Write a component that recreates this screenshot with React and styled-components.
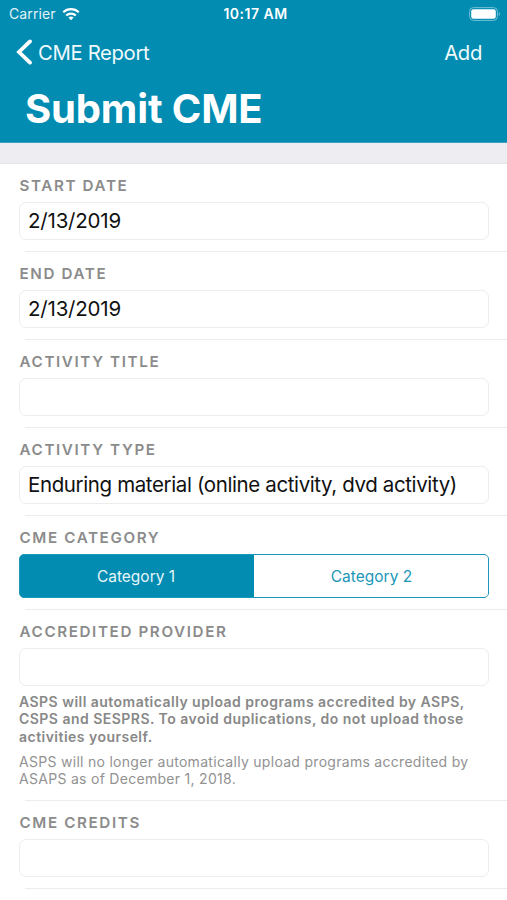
import React, { useState } from 'react';
import styled, { createGlobalStyle } from 'styled-components';

const GlobalStyle = createGlobalStyle`
  * {
    box-sizing: border-box;
  }
  body {
    margin: 0;
    background: #fff;
    font-family: Inter, "Liberation Sans", sans-serif;
  }
`;

const Screen = styled.div`
  width: 507px;
  height: 900px;
  overflow: hidden;
  background: #fff;
`;

const Header = styled.header`
  height: 143px;
  background: #028cb2;
  border-bottom: 1px solid #3ba3c0;
  color: #fff;
`;

const StatusBar = styled.div`
  display: grid;
  grid-template-columns: 1fr auto 1fr;
  align-items: center;
  height: 27px;
  padding: 0 6px 0 9px;
`;

const Carrier = styled.div`
  display: flex;
  align-items: center;
  gap: 6px;
  font-size: 14px;
  letter-spacing: 0.1px;
  color: #e2f3f8;
`;

const Clock = styled.div`
  padding-left: 1px;
  font-size: 14px;
  font-weight: 600;
  letter-spacing: 0.5px;
`;

const Battery = styled.div`
  display: flex;
  justify-content: flex-end;
`;

const NavBar = styled.nav`
  display: flex;
  justify-content: space-between;
  align-items: center;
  height: 50px;
  padding: 0 25px 0 16px;
`;

const NavButton = styled.button`
  display: flex;
  align-items: center;
  gap: 5px;
  padding: 0;
  border: 0;
  background: none;
  color: #f0fafc;
  font-family: inherit;
  font-size: 20.3px;
  letter-spacing: -0.35px;
`;

const Title = styled.h1`
  margin: 7px 0 0 25px;
  font-size: 40px;
  line-height: 50px;
  font-weight: 700;
  letter-spacing: -0.15px;
`;

const Spacer = styled.div`
  height: 21px;
  background: #eeeef2;
  border-bottom: 1px solid #e4e4e7;
`;

const Row = styled.div`
  height: ${props => props.$height || 88}px;
  padding: 11px 18px 0 19px;
  background: linear-gradient(#ececee, #ececee) no-repeat 25px 100% / 100% 1px;
`;

const Label = styled.div`
  height: 27px;
  padding-left: 0.5px;
  font-size: 15.2px;
  line-height: 22px;
  font-weight: 600;
  letter-spacing: 1.62px;
  color: #8b8b8b;
  text-transform: uppercase;
  white-space: nowrap;
`;

const Input = styled.input`
  display: block;
  width: 470px;
  height: 38px;
  padding: 0 8px 2px;
  border: 1px solid #ededed;
  border-radius: 7px;
  outline: 0;
  background: #fff;
  color: #111;
  font-family: inherit;
  font-size: 20.5px;
  letter-spacing: ${props => (props.type === 'text' ? '-0.38px' : '-0.2px')};
`;

const Segmented = styled.div`
  display: grid;
  grid-template-columns: 1fr 1fr;
  width: 470px;
  height: 44px;
  border: 1px solid #1b97b9;
  border-radius: 5px;
  overflow: hidden;
  background: #028cb2;
`;

const Segment = styled.button`
  padding: 0 2px 0 0;
  border: 0;
  background: ${props => (props.$active ? '#028cb2' : '#fff')};
  color: ${props => (props.$active ? '#e8f6fa' : '#1a96b9')};
  font-family: inherit;
  font-size: 15.5px;

  &:last-child {
    padding: 0 0 0 1px;
  }
`;

const Note = styled.p`
  margin: ${props => (props.$strong ? '7px' : '8px')} 0 0;
  font-size: 14px;
  line-height: 17.3px;
  font-weight: ${props => (props.$strong ? 600 : 400)};
  letter-spacing: ${props => (props.$strong ? 0.47 : 0.29)}px;
  color: ${props => (props.$strong ? '#888' : '#929292')};
  white-space: nowrap;
`;

const WifiIcon = () => (
  <svg width="18" height="14" viewBox="0 0 18 14" fill="none" stroke="#fff" strokeWidth="2.2">
    <path d="M1.2 5.3a11.2 11.2 0 0 1 15.6 0" />
    <path d="M4.2 8.5a6.9 6.9 0 0 1 9.6 0" />
    <path d="M9 13.2 6.4 10.6a3.8 3.8 0 0 1 5.2 0Z" fill="#fff" stroke="none" />
  </svg>
);

const BatteryIcon = () => (
  <svg width="32" height="14" viewBox="0 0 32 14">
    <rect x="0.6" y="0.6" width="27.8" height="12.8" rx="3.8" fill="none" stroke="#72bfd4" strokeWidth="1" />
    <rect x="2.2" y="2.2" width="24.6" height="9.6" rx="2.2" fill="#fff" />
    <path d="M29.8 5v4c1.6-.6 1.6-3.4 0-4Z" fill="#72bfd4" />
  </svg>
);

const BackIcon = () => (
  <svg width="17" height="26" viewBox="0 0 17 26" fill="none" stroke="#fff" strokeWidth="3.8" strokeLinecap="round">
    <path d="M14 2.4 3 13l11 10.6" />
  </svg>
);

const Field = ({ label, value = '', type = 'text', height, children }) => {
  const [text, setText] = useState(value);

  return (
    <Row $height={height}>
      <Label>{label}</Label>
      <Input type={type} aria-label={label} value={text} onChange={e => setText(e.target.value)} />
      {children}
    </Row>
  );
};

const App = () => {
  const [category, setCategory] = useState(1);

  return (
    <Screen>
      <GlobalStyle />
      <Header>
        <StatusBar>
          <Carrier>Carrier <WifiIcon /></Carrier>
          <Clock>10:17 AM</Clock>
          <Battery><BatteryIcon /></Battery>
        </StatusBar>
        <NavBar>
          <NavButton><BackIcon />CME Report</NavButton>
          <NavButton>Add</NavButton>
        </NavBar>
        <Title>Submit CME</Title>
      </Header>
      <Spacer />
      <Field label="Start Date" type="tel" value="2/13/2019" />
      <Field label="End Date" type="tel" value="2/13/2019" />
      <Field label="Activity Title" />
      <Field label="Activity Type" value="Enduring material (online activity, dvd activity)" />
      <Row $height={94}>
        <Label>CME Category</Label>
        <Segmented>
          {[1, 2].map(n => (
            <Segment key={n} $active={category === n} onClick={() => setCategory(n)}>
              Category {n}
            </Segment>
          ))}
        </Segmented>
      </Row>
      <Field label="Accredited Provider" height={191}>
        <Note $strong>
          ASPS will automatically upload programs accredited by ASPS,<br />
          CSPS and SESPRS. To avoid duplications, do not upload those<br />
          activities yourself.
        </Note>
        <Note>
          ASPS will no longer automatically upload programs accredited by<br />
          ASAPS as of December 1, 2018.
        </Note>
      </Field>
      <Field label="CME Credits" />
    </Screen>
  );
};

export default App;
